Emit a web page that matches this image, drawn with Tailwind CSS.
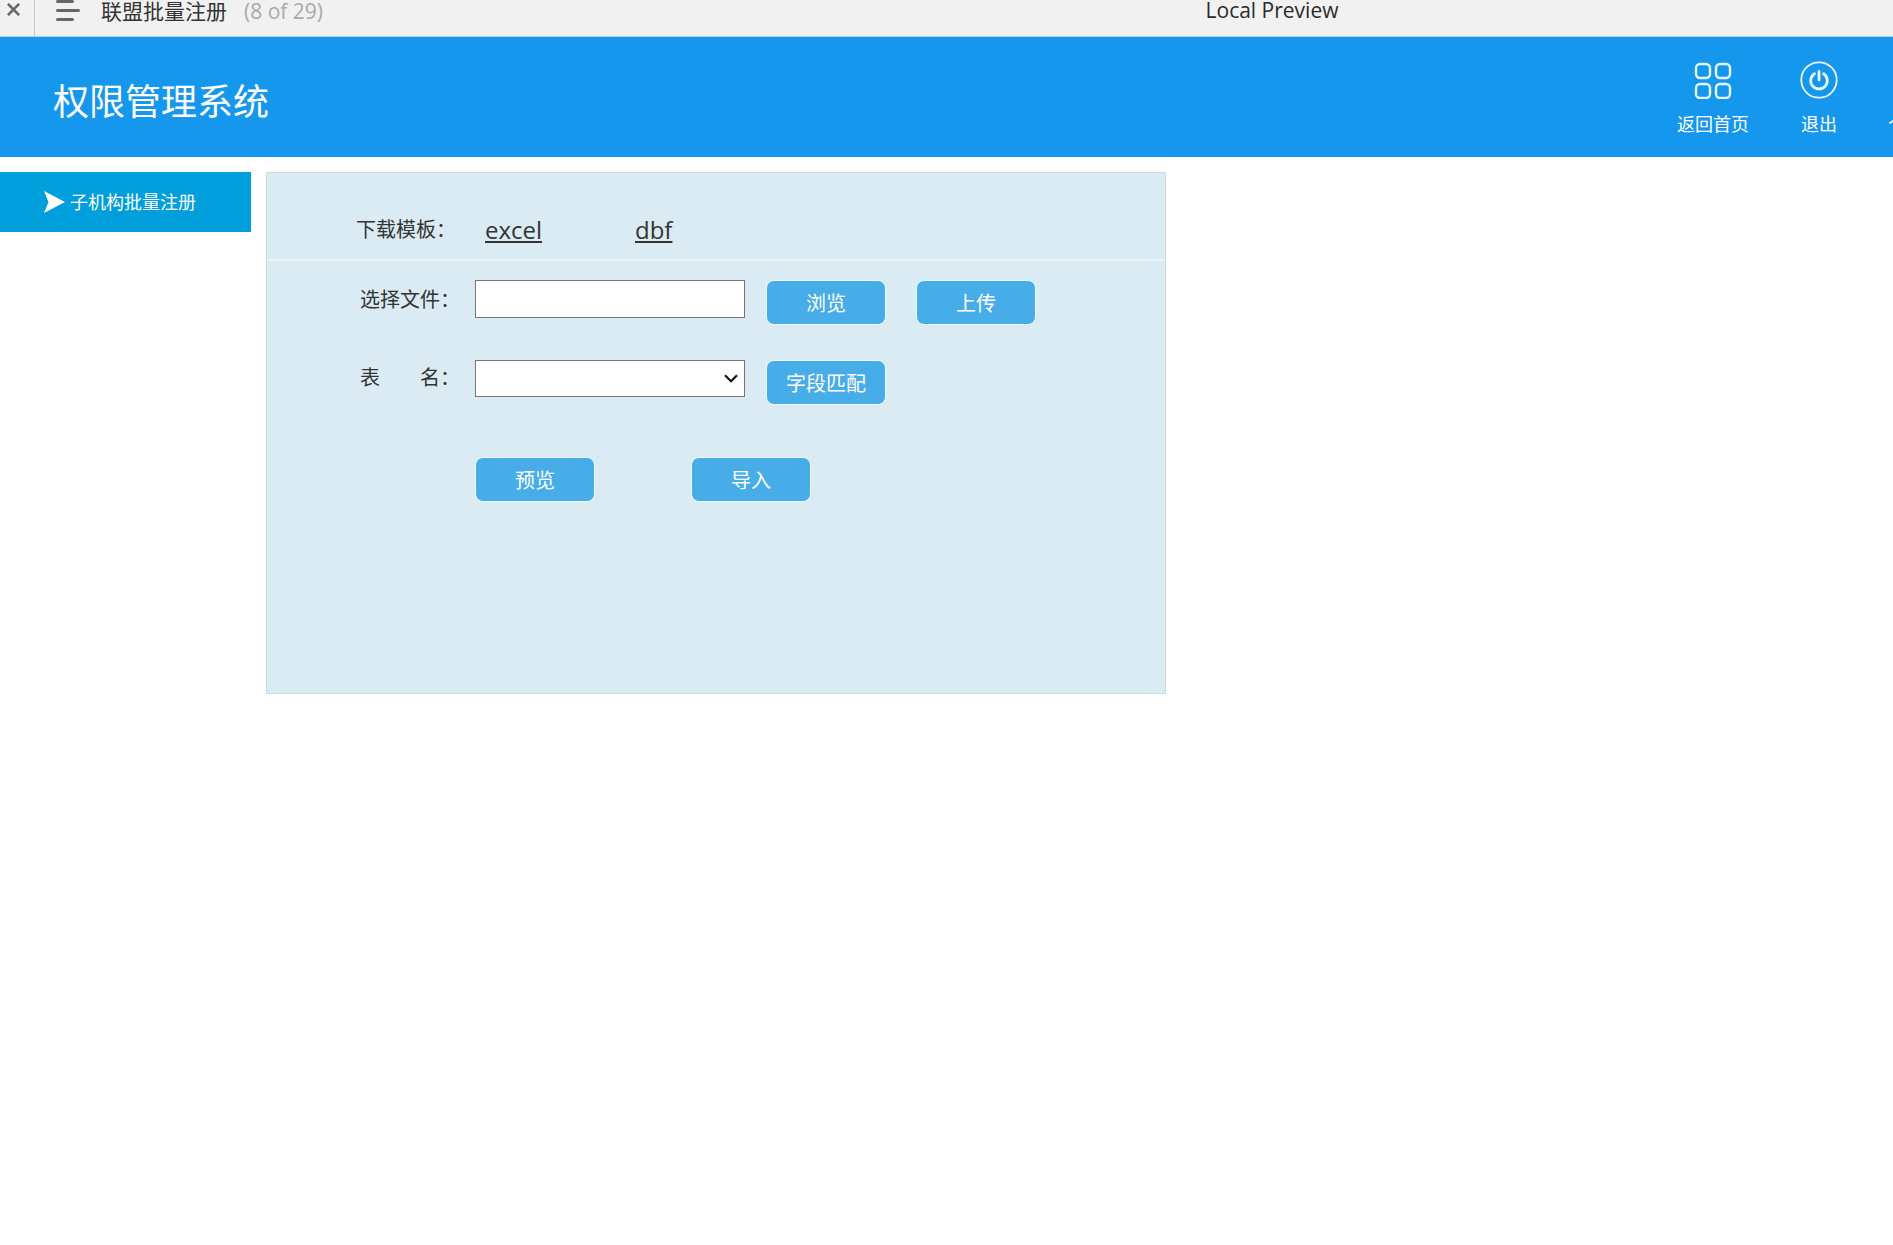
<!DOCTYPE html>
<html lang="zh-CN">
<head>
<meta charset="utf-8">
<title>联盟批量注册</title>
<script src="https://cdn.jsdelivr.net/npm/@tailwindcss/browser@4"></script>
</head>
<body class="min-h-screen overflow-x-hidden bg-white font-['Open_Sans','Noto_Sans_CJK_SC',sans-serif] text-xl text-[#333]">

<!-- Preview toolbar -->
<div class="flex h-[37px] items-start border-b border-[#b5d3e6] bg-[#f1f1f1]">
  <button type="button" aria-label="关闭" class="flex h-9 w-[35px] items-start border-r border-[#c8c8c8] pt-[3px] pl-[7px]">
    <svg class="h-[13px] w-[13px]" viewBox="0 0 12 12" fill="none" stroke="#666" stroke-width="2.400"><path d="M.8.8l10.400 10.400M11.200.8L.8 11.200"/></svg>
  </button>
  <button type="button" aria-label="页面列表" class="ml-[21px] h-[22px] w-6">
    <svg class="h-[22px] w-6" viewBox="0 0 24 22" fill="none" stroke="#666" stroke-width="3" stroke-linecap="round"><path d="M1.500 1.500h15M1.500 10.500h21M1.500 19.500h15"/></svg>
  </button>
  <div class="ml-[21px] w-[143px] text-[21px] leading-[22px] whitespace-nowrap">联盟批量注册</div>
  <div class="text-[21px] leading-[22px] text-[#aaa]">(8 of 29)</div>
  <div class="flex-1 pl-[328px] text-center text-[21px] leading-5 text-[#2b2b2b]">Local Preview</div>
</div>

<!-- Header -->
<header class="flex h-[120px] items-start justify-between overflow-hidden bg-[#1497ec] text-white">
  <h1 class="pt-[38px] pl-[53px] text-4xl leading-[54px]">权限管理系统</h1>
  <nav class="flex text-lg leading-6">
    <a href="#" class="flex w-[106px] flex-col items-center gap-[13px] pt-6">
      <svg class="h-[38px] w-[38px]" viewBox="0 0 38 38" fill="none" stroke="#e6f8ff" stroke-width="2.400"><rect x="2" y="3" width="14" height="14" rx="4"/><rect x="22" y="3" width="14" height="14" rx="4"/><rect x="2" y="23" width="14" height="14" rx="4"/><rect x="22" y="23" width="14" height="14" rx="4"/></svg>
      <span>返回首页</span>
    </a>
    <a href="#" class="flex w-[106px] flex-col items-center gap-[13px] pt-6">
      <svg class="h-[38px] w-[38px]" viewBox="0 0 38 38" fill="none" stroke="#e6f8ff" stroke-linecap="round"><circle cx="19" cy="19" r="17.700" stroke-width="1.800"/><path d="M14.500 12.700a8.300 8.300 0 1 0 9 0" stroke-width="2.800"/><path d="M19 10.500v8.500" stroke-width="2.800"/></svg>
      <span>退出</span>
    </a>
    <a href="#" class="w-[21px] pt-[75px] pl-4 whitespace-nowrap">个</a>
  </nav>
</header>

<div class="flex items-start gap-[15px] pt-[15px]">
  <!-- Side menu -->
  <aside class="w-[251px] shrink-0">
    <a href="#" class="flex h-[60px] items-center gap-[5px] bg-[#009edb] pl-11 text-lg leading-6 text-white">
      <svg class="h-[22px] w-[21px]" viewBox="0 0 21 22" fill="#fff"><path d="M0 0L21 11 0 22 4.500 11z"/></svg>
      <span>子机构批量注册</span>
    </a>
  </aside>

  <!-- Import panel -->
  <main class="min-h-[522px] w-[900px] border border-[#c9dbe4] bg-[#daebf4]">
    <div class="flex h-[88px] items-center border-b-2 border-[#eaf4f9] pt-[27px] pl-[89px]">
      <span class="w-[129px]">下载模板：</span>
      <a href="#" class="w-[150px] text-2xl underline decoration-2 underline-offset-2">excel</a>
      <a href="#" class="text-2xl underline decoration-2 underline-offset-2">dbf</a>
    </div>
    <form class="pt-[19px] pl-[93px]">
      <div class="flex h-20 items-start">
        <label for="file" class="w-[115px] leading-10">选择文件：</label>
        <input id="file" type="text" class="h-[38px] w-[270px] border border-[#767676] bg-white px-2">
        <button type="button" class="ml-[21px] h-[45px] w-[120px] rounded-lg border border-[#eefaff] bg-[#47ade8] pt-0.5 text-white">浏览</button>
        <button type="button" class="ml-[30px] h-[45px] w-[120px] rounded-lg border border-[#eefaff] bg-[#47ade8] pt-0.5 text-white">上传</button>
      </div>
      <div class="flex items-start">
        <label for="table" class="w-[115px] leading-9">表&#12288;&#12288;名：</label>
        <div class="relative">
          <select id="table" class="block h-[37px] w-[270px] appearance-none border border-[#767676] bg-white px-2"><option></option></select>
          <svg class="pointer-events-none absolute top-[14px] right-[7px] h-[9px] w-[14px]" viewBox="0 0 14 9" fill="none" stroke="#111" stroke-width="2.200"><path d="M1 1.200l6 6 6-6"/></svg>
        </div>
        <button type="button" class="ml-[21px] h-[45px] w-[120px] rounded-lg border border-[#eefaff] bg-[#47ade8] pt-0.5 text-white">字段匹配</button>
      </div>
      <div class="flex gap-24 pt-[52px] pl-[115px]">
        <button type="button" class="h-[45px] w-[120px] rounded-lg border border-[#eefaff] bg-[#47ade8] pt-0.5 text-white">预览</button>
        <button type="submit" class="h-[45px] w-[120px] rounded-lg border border-[#eefaff] bg-[#47ade8] pt-0.5 text-white">导入</button>
      </div>
    </form>
  </main>
</div>
</body>
</html>
